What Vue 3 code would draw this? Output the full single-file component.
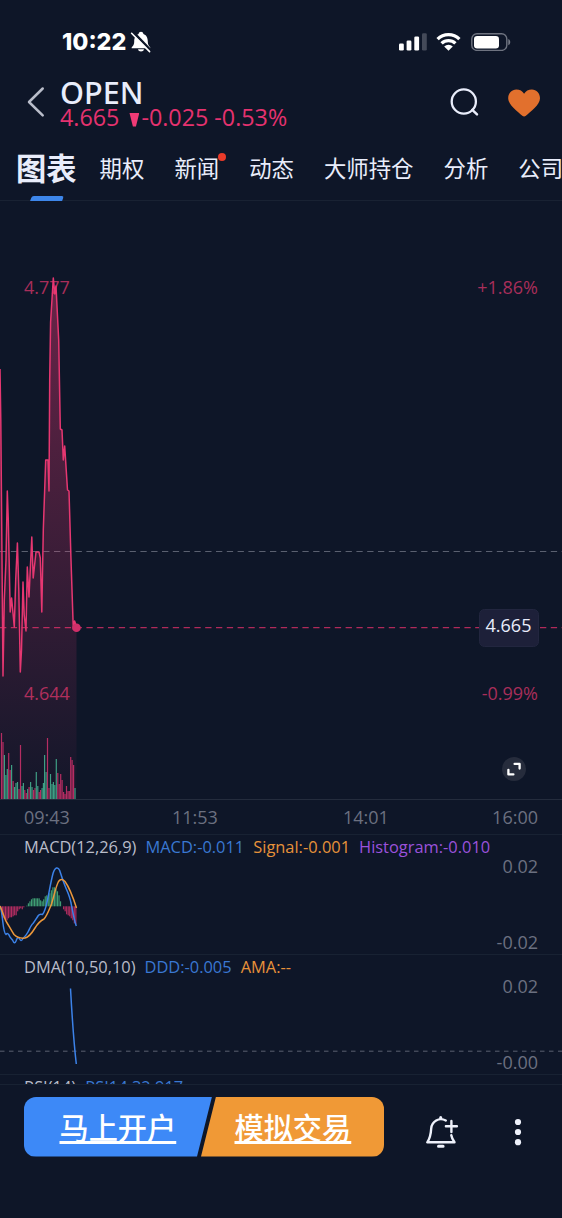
<template>
  <div class="screen">
    <div class="status-bar">
      <span class="clock">10:22</span>
      <svg class="mute" width="22" height="22" viewBox="0 0 22 22">
        <path d="M1.600 17.200c0-1.500 2.600-2.300 2.600-6.400C4.200 6.300 6 3.900 8.600 3.100c.3-3.100 4.500-3.100 4.800 0 2.600.8 4.400 3.200 4.400 7.700 0 4.100 2.600 4.900 2.600 6.400z" fill="#fff" />
        <path d="M8 18.300h6c-.5 2.900-5.500 2.900-6 0z" fill="#fff" />
        <path d="M3 1l18 18.600" stroke="#0e1628" stroke-width="2.600" />
        <path d="M1.600 2.300l18 18.300" stroke="#fff" stroke-width="1.600" stroke-linecap="round" />
      </svg>
      <div class="status-icons">
        <svg width="28" height="18" viewBox="0 0 28 18">
          <rect x="0" y="10.500" width="4.800" height="7" rx="1.300" fill="#fff" />
          <rect x="7.600" y="7.500" width="4.800" height="10" rx="1.300" fill="#fff" />
          <rect x="15.300" y="3.500" width="4.800" height="14" rx="1.300" fill="#fff" />
          <rect x="23" y="0.300" width="4.800" height="17.200" rx="1.300" fill="#444a59" />
        </svg>
        <svg class="wifi" width="25" height="18" viewBox="0 0 25 18">
          <path d="M1.600 6.200a15.400 15.400 0 0 1 21.800 0M5.600 10.400a9.800 9.800 0 0 1 13.800 0" fill="none" stroke="#fff" stroke-width="3.300" />
          <path d="M8.200 13.500a6.100 6.100 0 0 1 8.600 0l-4.300 4.300z" fill="#fff" />
        </svg>
        <svg class="battery" width="40" height="18" viewBox="0 0 40 18">
          <rect x="0.800" y="0.800" width="35" height="16.600" rx="5.200" fill="none" stroke="#6e7380" stroke-width="1.400" />
          <rect x="3" y="3" width="25" height="12.400" rx="3.200" fill="#fff" />
          <path d="M37.300 6v6.200c2.600-1 2.600-5.200 0-6.200z" fill="#767b87" />
        </svg>
      </div>
    </div>

    <div class="header">
      <svg class="back" width="20" height="32" viewBox="0 0 20 32">
        <path d="M16.700 2.500L3 16l13.700 13.300" fill="none" stroke="#b9bdca" stroke-width="2.500" stroke-linecap="round" stroke-linejoin="round" />
      </svg>
      <div class="quote">
        <div class="symbol">OPEN</div>
        <div class="price">
          <span>4.665</span>
          <i class="down"></i>
          <span>-0.025 -0.53%</span>
        </div>
      </div>
      <svg class="search" width="30" height="30" viewBox="0 0 30 30">
        <circle cx="13.800" cy="13.500" r="12.100" fill="none" stroke="#e9edfb" stroke-width="2.300" />
        <path d="M22.300 21.800l4.700 4.500" stroke="#e9edfb" stroke-width="2.500" stroke-linecap="round" />
      </svg>
      <svg class="heart" width="32" height="28" viewBox="0 0 32 28">
        <path d="M14.300 26.800C10 23 .2 16 .2 9.300.2 4 3.800.5 8.300.5c3.500 0 6.100 1.500 7.800 4.200C17.800 2 20.400.5 23.900.5c4.500 0 8.100 3.500 8.100 8.800 0 6.700-9.800 13.700-14.100 17.500-1.200 1-2.400 1-3.600 0z" fill="#e2702d" />
      </svg>
    </div>

    <nav class="tabs">
      <div v-for="(tab, i) in tabs" :key="tab" class="tab" :class="{ active: i === 0 }">
        {{ tab }}
        <i v-if="i === 2" class="dot"></i>
      </div>
    </nav>

    <svg class="chart" width="562" height="598" viewBox="0 201 562 598">
      <defs>
        <linearGradient id="area" gradientUnits="userSpaceOnUse" x1="0" y1="278" x2="0" y2="799">
          <stop offset="0" stop-color="#f33a78" stop-opacity="0.4" />
          <stop offset="1" stop-color="#f33a78" stop-opacity="0.02" />
        </linearGradient>
      </defs>
      <text x="24" y="293.500" class="limit">4.777</text>
      <text x="538" y="293.500" class="limit end">+1.86%</text>
      <text x="24" y="699.500" class="limit">4.644</text>
      <text x="538" y="699.500" class="limit end">-0.99%</text>
      <path d="M0 551.500H562" class="dash" />
      <path d="M0 627.600H562" class="dash last" />
      <polygon :points="`0,799 ${pricePoints} 76.500,799`" fill="url(#area)" />
      <rect
        v-for="(bar, i) in volume"
        :key="i"
        :x="bar[0] - 0.6"
        :y="bar[1]"
        width="1.2"
        :height="799 - bar[1]"
        :fill="bar[2] ? '#3f9e84' : '#b52d62'"
      />
      <polyline :points="pricePoints" class="line price-line" />
      <circle cx="76.500" cy="627.700" r="4.300" fill="#d02f69" />
      <rect x="479.500" y="609.500" width="59" height="37" rx="5" fill="#1d2039" stroke="#22263f" />
      <text x="508.500" y="632" class="tag">4.665</text>
      <circle cx="514" cy="769" r="12" fill="#262c3c" />
      <path d="M514.600 763.900h5v4.600M513.400 774.400h-5v-4.600" fill="none" stroke="#fff" stroke-width="2.300" stroke-linejoin="round" stroke-linecap="round" />
    </svg>

    <div class="time-axis">
      <span v-for="t in times" :key="t">{{ t }}</span>
    </div>

    <div class="indicator">
      <div class="legend">
        <span>MACD(12,26,9)</span>
        <span class="blue">MACD:-0.011</span>
        <span class="orange">Signal:-0.001</span>
        <span class="purple">Histogram:-0.010</span>
      </div>
      <svg width="562" height="96" viewBox="0 858 562 96">
        <rect
          v-for="(v, i) in histogram"
          :key="i"
          :x="i * 1.53 + 0.3"
          :y="v > 0 ? 906.3 - v : 906.3"
          width="1.15"
          :height="Math.abs(v)"
          :fill="v > 0 ? '#3f9e74' : '#b52d62'"
        />
        <path d="M0 906C1 908 2 914 2.700 921C3.500 928 4.500 934 6 934.500C7.500 932.500 8.300 934 9 935C10 938 11.500 938.500 12.500 940C14 943.500 15 943.500 16 941C17 938 18 937 19 938C20.500 941 21.500 941.500 23 938.500C25 936.500 26.500 935 28 932C30 928 31 925 33 923.500C35 921 36 919 38.300 915.500C39.500 914 41 914 42.500 914.500C45 912 46 907 47.500 900C49.500 890 51 881 53 873.500C55 867 58 866.500 59.700 870.500C61.500 876 63 881 65.500 887C68 893 70 897 71 903C72.500 910 74 920 76.300 926" class="line blue-line" />
        <path d="M0 906C2 910 4 917 6.500 922C9 926 11 930 14 934.500C17 937.500 21 938.500 25 938C29 937 32 933 35 928C38 923 41 920.500 44 919C47 916 49 910 51.500 904C54 896 56 886 58.500 881.500C60.500 878.500 63 879 65 881.500C69 887 73 897 76.500 908" class="line orange-line" />
        <text x="538" y="873" class="scale">0.02</text>
        <text x="538" y="948.500" class="scale">-0.02</text>
      </svg>
    </div>

    <div class="indicator">
      <div class="legend">
        <span>DMA(10,50,10)</span>
        <span class="blue">DDD:-0.005</span>
        <span class="orange">AMA:--</span>
      </div>
      <svg width="562" height="96" viewBox="0 978 562 96">
        <path d="M0 1051.200H562" class="dash small" />
        <path d="M70.500 988.500C71.800 1012 73.500 1040 76.300 1064" class="line blue-line" />
        <text x="538" y="993" class="scale">0.02</text>
        <text x="538" y="1068.500" class="scale">-0.00</text>
      </svg>
    </div>

    <div class="indicator clipped">
      <div class="legend">
        <span>RSI(14)</span>
        <span class="blue">RSI14:32.917</span>
      </div>
    </div>

    <div class="footer">
      <div class="actions">
        <a class="btn open">马上开户</a>
        <a class="btn demo">模拟交易</a>
      </div>
      <svg class="alert" width="34" height="34" viewBox="0 0 34 34" fill="none" stroke="#eef1fb" stroke-width="2.400" stroke-linecap="round" stroke-linejoin="round">
        <path d="M20.800 5.500C14 1.800 6.800 6.500 6.200 13.500C5.900 19 5.500 22.500 2.300 27.300H29.500C27.800 25 26.800 23 26.300 20.300" />
        <path d="M15.700 2.600v1M13.500 31.300h4.600" stroke-width="3" />
        <path d="M26.400 6v11M20.900 11.300h11" />
      </svg>
      <svg class="more" width="8" height="28" viewBox="0 0 8 28" fill="#eef1fb">
        <circle cx="4" cy="4" r="3.100" />
        <circle cx="4" cy="14" r="3.100" />
        <circle cx="4" cy="24.200" r="3.100" />
      </svg>
    </div>
  </div>
</template>

<script setup>
import { ref } from 'vue';

const tabs = ref(['图表', '期权', '新闻', '动态', '大师持仓', '分析', '公司']);
const times = ['09:43', '11:53', '14:01', '16:00'];

const pricePoints = [
  '0,369', '0.8,420', '3,676', '4.3,600', '6,560', '7.3,491', '8.3,520', '10.2,612', '11.6,598',
  '14.3,627', '15.7,580', '17.4,543', '18.8,590', '20.3,672', '21.5,650', '23,582', '24.2,615',
  '26,631', '27.3,567', '29,597', '31.8,537', '33.2,578', '36,552', '39,552', '40.3,558',
  '41.8,612', '43.3,530', '45.7,460', '48,460', '49,491', '49.7,380', '50.6,322', '53.3,278',
  '54.8,294', '56,286', '58.7,340', '60.3,429', '62,430', '63.3,460', '64.7,446', '67.5,490',
  '69,491', '71,560', '73.3,629', '74.6,621', '76.5,627'
].join(' ');

// [x, 柱顶 y, 是否上涨]
const volume = [
  [1.5, 733, 0], [3, 742, 0], [4.4, 755, 1], [5.9, 775, 1], [7.3, 769, 1], [8.7, 753, 0],
  [10.2, 770, 0], [11.6, 765, 1], [13.1, 781, 0], [14.6, 787, 1], [16, 783, 1], [17.5, 782, 1],
  [19, 789, 0], [20.5, 745, 0], [22, 786, 1], [23.4, 783, 1], [24.8, 790, 0], [26.3, 793, 0],
  [27.7, 789, 1], [29.1, 787, 0], [30.6, 782, 1], [32, 787, 1], [33.5, 790, 0], [35, 788, 0],
  [36.3, 772, 1], [37.8, 786, 1], [39.2, 792, 0], [40.6, 790, 0], [42.1, 788, 1], [43.4, 783, 1],
  [44.6, 755, 1], [46.1, 772, 1], [47.5, 738, 0], [49, 788, 0], [50.5, 774, 1], [52, 784, 1],
  [53.4, 782, 1], [54.8, 785, 1], [56.3, 759, 1], [57.8, 773, 0], [59.2, 784, 0], [60.7, 774, 0],
  [62.1, 780, 0], [63.6, 792, 0], [65, 794, 0], [66.5, 786, 0], [68, 791, 0], [69.3, 791, 0],
  [70.7, 757, 0], [72.1, 760, 0], [73.6, 765, 0], [75, 788, 1]
];

const histogram = [
  -3, -9, -12, -15, -14, -12, -11, -11, -10, -9, -9, -5, -3, -2, -3, -1, 0, 0.6,
  3, 5, 7, 8, 8, 8, 8, 8, 6, 5, 7, 10, 11, 10, 13, 16, 19, 19, 17, 15, 11, 5, 0,
  -3, -5, -8, -9, -10, -12, -14, -17, -18
];
</script>

<style>
body {
  margin: 0;
  background: #0e1628;
}
</style>

<style scoped>
.screen {
  width: 562px;
  height: 1218px;
  overflow: hidden;
  display: flex;
  flex-direction: column;
  background: #0e1628;
  color: #e9edfb;
  font-family: "Open Sans", "Noto Sans CJK SC", sans-serif;
}
.screen > * {
  flex-shrink: 0;
}
svg {
  display: block;
}
.status-bar {
  height: 79px;
  box-sizing: border-box;
  padding: 4px 51.5px 0 62px;
  display: flex;
  align-items: center;
}
.clock {
  font-family: Inter, sans-serif;
  font-weight: 800;
  font-size: 23.3px;
  color: #fff;
}
.mute {
  margin-left: 4px;
}
.status-icons {
  display: flex;
  margin-left: auto;
}
.wifi { margin-left: 9px; }
.battery { margin-left: 9.5px; }
.header {
  height: 59px;
  display: flex;
  align-items: flex-start;
}
.back {
  margin: 7px 0 0 26px;
}
.quote {
  margin-left: 14px;
  flex: 1;
}
.symbol {
  font-family: "Noto Sans", sans-serif;
  font-size: 30.6px;
  font-weight: 500;
  line-height: 27px;
}
.price {
  display: flex;
  align-items: center;
  font-size: 23.3px;
  line-height: 23px;
  color: #e5326f;
  white-space: nowrap;
}
.down {
  width: 10px;
  height: 14px;
  margin: 4px 2px 0 10px;
  background: #f03a76;
  clip-path: polygon(0 0, 100% 0, 65% 100%, 35% 100%);
}
.search {
  margin: 9px 28px 0 0;
}
.heart {
  margin: 10px 22px 0 0;
}
.tabs {
  height: 62px;
  display: flex;
  align-items: center;
  gap: 30px;
  padding-left: 16px;
  border-bottom: 1px solid #192233;
  white-space: nowrap;
  font-size: 22.4px;
}
.tab {
  position: relative;
  flex-shrink: 0;
  margin-bottom: 4px;
}
.tab.active {
  font-size: 30.3px;
  font-weight: 700;
  margin-right: -7px;
}
.tab.active::after {
  content: "";
  position: absolute;
  left: 15px;
  bottom: -12px;
  width: 32px;
  height: 5px;
  border-radius: 2px 2px 0 0;
  transform: skewX(-20deg);
  background: #3d86ea;
}
.dot {
  position: absolute;
  right: -7px;
  top: 2px;
  width: 8px;
  height: 8px;
  border-radius: 50%;
  background: #e93a29;
}
.limit {
  font-size: 18px;
  fill: #a82e5a;
}
.end {
  text-anchor: end;
}
.dash {
  stroke: #5a6070;
  stroke-dasharray: 6.3 4.5;
}
.dash.last {
  stroke: #b02a5a;
  stroke-width: 1.3;
}
.dash.small {
  stroke-dasharray: 4.5 4.5;
}
.line {
  fill: none;
  stroke-width: 1.5;
  stroke-linejoin: round;
}
.price-line { stroke: #e63771; }
.blue-line { stroke: #3c82e8; }
.orange-line { stroke: #eb973b; }
.tag {
  font-size: 18px;
  fill: #e9edfb;
  text-anchor: middle;
}
.time-axis {
  height: 34px;
  display: grid;
  grid-template-columns: 148px 171px 1fr auto;
  padding: 0 24px;
  border-top: 1px solid #242c3d;
  font-size: 18px;
  line-height: 35px;
  color: #6b7080;
}
.indicator {
  height: 119px;
  border-top: 1px solid #182233;
}
.indicator.clipped {
  height: 9px;
  overflow: hidden;
}
.legend {
  display: flex;
  gap: 9px;
  padding-left: 24px;
  height: 23px;
  font-size: 16.42px;
  line-height: 23px;
  color: #b9bdca;
  white-space: nowrap;
}
.blue { color: #3a78d2; }
.orange { color: #e7923a; }
.purple { color: #9b52dc; }
.scale {
  font-size: 18px;
  fill: #6b7080;
  text-anchor: end;
}
.footer {
  flex: 1;
  display: flex;
  align-items: flex-start;
  border-top: 1px solid #182233;
  padding: 11.5px 0 0 24px;
}
.actions {
  display: flex;
  width: 360px;
  height: 60px;
  border-radius: 12px;
  overflow: hidden;
}
.btn {
  box-sizing: border-box;
  line-height: 62px;
  font-size: 29.2px;
  font-weight: 500;
  color: #fff;
  text-decoration: underline;
  text-decoration-thickness: 2.5px;
}
.open {
  width: 188px;
  padding-left: 35.5px;
  background: #3d89f7;
  clip-path: polygon(0 0, 100% 0, 173px 100%, 0 100%);
}
.demo {
  width: 183px;
  margin-left: -11px;
  padding-left: 33.5px;
  background: #f09936;
  clip-path: polygon(15px 0, 100% 0, 100% 100%, 0 100%);
}
.alert {
  margin: 18px 0 0 41px;
}
.more {
  margin: 21px 0 0 55px;
}
</style>
